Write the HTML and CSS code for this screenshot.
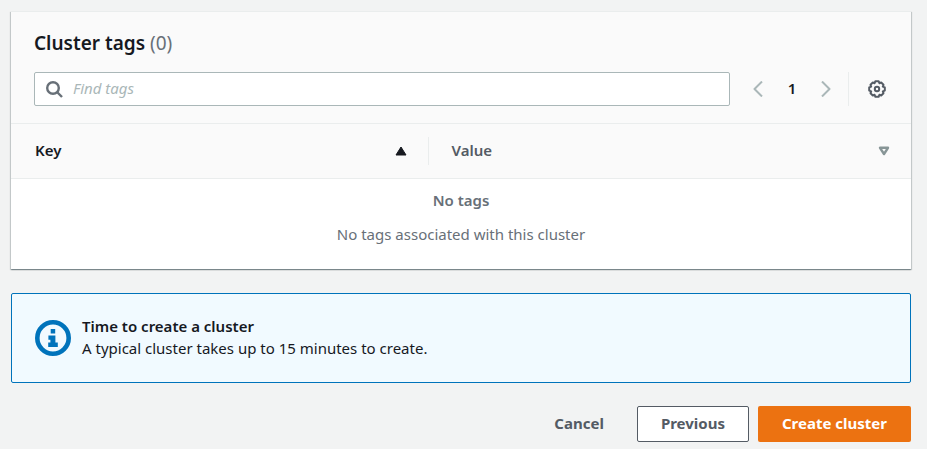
FILE: index.html
```html
<!DOCTYPE html>
<html lang="en">
<head>
  <meta charset="UTF-8">
  <title>Create cluster</title>
  <link rel="stylesheet" href="styles.css">
</head>
<body>
  <main class="page">
    <!-- Tags table -->
    <section class="card">
      <div class="card-header">
        <h2 class="card-title">Cluster tags <span class="counter">(0)</span></h2>
        <div class="toolbar">
          <div class="search">
            <svg class="search-icon" viewBox="0 0 17 17" aria-hidden="true">
              <circle cx="7" cy="7" r="5.8"/>
              <path d="M11 11L16 16"/>
            </svg>
            <input class="search-input" type="text" placeholder="Find tags" aria-label="Find tags">
          </div>
          <nav class="pagination" aria-label="Pagination">
            <button class="icon-btn" type="button" aria-label="Previous page">
              <svg class="chevron" viewBox="0 0 10 16"><path d="M9 0.5L1.5 8L9 15.5"/></svg>
            </button>
            <button class="page-number" type="button">1</button>
            <button class="icon-btn" type="button" aria-label="Next page">
              <svg class="chevron" viewBox="0 0 10 16"><path d="M1 0.5L8.5 8L1 15.5"/></svg>
            </button>
          </nav>
          <div class="settings">
            <button class="icon-btn" type="button" aria-label="Preferences">
              <svg class="gear" viewBox="0 0 18 18">
                <path d="M7.4 1.2H10.6L11.4 3.2L13.2 2.5L15.5 4.8L14.8 6.6L16.8 7.4V10.6L14.8 11.4L15.5 13.2L13.2 15.5L11.4 14.8L10.6 16.8H7.4L6.6 14.8L4.8 15.5L2.5 13.2L3.2 11.4L1.2 10.6V7.4L3.2 6.6L2.5 4.8L4.8 2.5L6.6 3.2z"/>
                <circle cx="9" cy="9" r="2.2"/>
              </svg>
            </button>
          </div>
        </div>
      </div>
      <table class="tags">
        <thead>
          <tr>
            <th class="col-key" scope="col" aria-sort="ascending">
              <button class="sort active" type="button">
                <span class="sort-label">Key</span>
                <svg class="sort-icon filled" viewBox="0 0 12 10"><path d="M6 1L11 9H1z"/></svg>
              </button>
            </th>
            <th scope="col">
              <button class="sort" type="button">
                <span class="sort-label">Value</span>
                <svg class="sort-icon" viewBox="0 0 12 10"><path d="M2 1.8H10L6 8z"/></svg>
              </button>
            </th>
          </tr>
        </thead>
        <tbody>
          <tr>
            <td class="empty" colspan="2">
              <p class="empty-title">No tags</p>
              <p>No tags associated with this cluster</p>
            </td>
          </tr>
        </tbody>
      </table>
    </section>

    <!-- Info message -->
    <section class="alert">
      <svg class="alert-icon" viewBox="0 0 36 36" aria-hidden="true">
        <circle cx="18" cy="18" r="15.7"/>
        <path d="M15.7 9H20.2V13.4H15.7zM13.4 15.4H20.4V22.4H22.8V27H13.2V22.4H15.4V19.8H13.4z"/>
      </svg>
      <div class="alert-text">
        <h3 class="alert-title">Time to create a cluster</h3>
        <p>A typical cluster takes up to 15 minutes to create.</p>
      </div>
    </section>

    <!-- Wizard buttons -->
    <div class="actions">
      <button class="btn btn-link" type="button">Cancel</button>
      <button class="btn btn-normal" type="button">Previous</button>
      <button class="btn btn-primary" type="button">Create cluster</button>
    </div>
  </main>
</body>
</html>
```

FILE: styles.css
```css
* {
  box-sizing: border-box;
}
body {
  margin: 0;
  background: #f2f3f3;
  color: #16191f;
  font-family: "Noto Sans", "Open Sans", sans-serif;
  font-size: 15px;
  line-height: 22px;
}
h2, h3, p {
  margin: 0;
}
button {
  font: inherit;
  color: inherit;
  background: none;
  border: none;
  padding: 0;
  cursor: pointer;
}
svg {
  display: block;
  fill: none;
  stroke: currentColor;
  stroke-width: 2;
  stroke-linejoin: round;
}
.page {
  padding: 11px 16px 7px 11px;
}

/* Card */
.card {
  background: #fff;
  border-top: 1px solid #eaeded;
  box-shadow: 0 1px 1px 0 rgba(0,28,36,0.3), 1px 1px 1px 0 rgba(0,28,36,0.15), -1px 1px 1px 0 rgba(0,28,36,0.15);
}
.card-header {
  background: #fafafa;
  padding: 17px 25px 17px 23px;
}
.card-title {
  font-size: 19px;
  font-weight: 600;
  line-height: 28px;
  margin-bottom: 15px;
}
.counter {
  color: #687078;
  font-weight: 400;
}
.toolbar {
  display: flex;
  align-items: center;
}
.search {
  flex: 1;
  display: flex;
  align-items: center;
  gap: 10px;
  height: 34px;
  padding: 0 11px;
  background: #fff;
  border: 1px solid #aab7b8;
  border-radius: 2px;
}
.search-icon {
  width: 17px;
  height: 17px;
  color: #687078;
  stroke-width: 2.4;
}
.search-input {
  flex: 1;
  min-width: 0;
  padding: 0 0 2px;
  border: none;
  outline: none;
  background: none;
  font: inherit;
}
.search-input::placeholder {
  color: #aab7b8;
  font-style: italic;
}
.pagination {
  display: flex;
  align-items: center;
  gap: 19px;
  padding: 0 17px 0 23px;
}
.chevron {
  width: 10px;
  height: 16px;
  color: #aab7b8;
}
.page-number {
  width: 20px;
  padding-bottom: 3px;
  font-weight: 600;
}
.settings {
  display: flex;
  align-items: center;
  height: 34px;
  padding-left: 19px;
  border-left: 1px solid #eaeded;
}
.gear {
  width: 18px;
  height: 18px;
  color: #545b64;
}

/* Table */
.tags {
  width: 100%;
  table-layout: fixed;
  border-collapse: collapse;
}
.tags th {
  height: 55px;
  padding: 0;
  background: #fafafa;
  border-top: 1px solid #eaeded;
  border-bottom: 1px solid #eaeded;
}
.col-key {
  width: 46.4%;
}
.sort {
  display: flex;
  align-items: center;
  justify-content: space-between;
  width: 100%;
  height: 28px;
  padding: 0 21px 0 23px;
  color: #545b64;
  font-weight: 600;
}
.col-key .sort {
  padding: 0 21px 0 24px;
  border-right: 1px solid #eaeded;
}
.sort.active {
  color: #16191f;
}
.sort-label {
  padding-bottom: 3px;
}
.sort-icon {
  width: 12px;
  height: 10px;
  color: #879596;
  stroke-width: 2.4;
}
.sort-icon.filled {
  color: #16191f;
  fill: currentColor;
  stroke-width: 1;
}
.empty {
  padding: 10px 20px 24px;
  color: #687078;
  text-align: center;
}
.empty-title {
  font-weight: 600;
  margin-bottom: 12px;
}

/* Alert */
.alert {
  display: flex;
  align-items: center;
  gap: 11px;
  margin-top: 24px;
  padding: 21px 23px;
  background: #f1faff;
  border: 1px solid #0073bb;
  border-radius: 2px;
}
.alert-icon {
  width: 36px;
  height: 36px;
  color: #0073bb;
  stroke-width: 4.6;
}
.alert-icon path {
  fill: currentColor;
  stroke: none;
}
.alert-text {
  padding-bottom: 2px;
}
.alert-title {
  font-size: 15px;
  font-weight: 600;
}

/* Buttons */
.actions {
  display: flex;
  justify-content: flex-end;
  gap: 9px;
  margin-top: 23px;
}
.btn {
  height: 36px;
  padding: 0 23px 2px;
  border: 1px solid transparent;
  border-radius: 2px;
  color: #545b64;
  font-weight: 700;
}
.btn-normal {
  background: #fff;
  border-color: #545b64;
}
.btn-primary {
  background: #ec7211;
  color: #fff;
}
```
